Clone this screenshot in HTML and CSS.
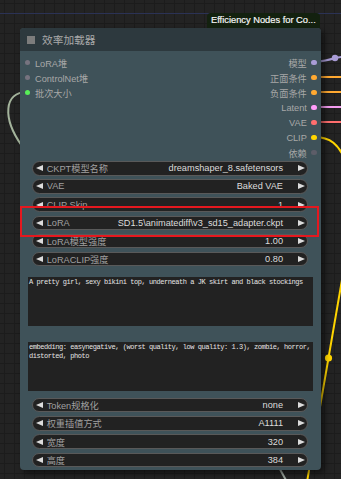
FILE: index.html
```html
<!DOCTYPE html>
<html lang="zh">
<head>
<meta charset="utf-8">
<title>效率加载器</title>
<link rel="stylesheet" href="styles.css">
</head>
<body>
<svg class="wires" width="341" height="479" viewBox="0 0 341 479">
  <line x1="0" y1="13.5" x2="341" y2="13.5" stroke="#2b3255" stroke-width="1"/>
  <path d="M27 92 C 4 92, 2 118, 22 146" fill="none" stroke="#a4b49c" stroke-width="2"/>
  <path d="M276 462 L 287 482" fill="none" stroke="#9aa49c" stroke-width="2"/>
  <path d="M314 62 Q 326 61 335 58 L 345 56.5" fill="none" stroke="#a99cd6" stroke-width="2"/>
  <circle cx="335" cy="58" r="3.2" fill="#a99cd6"/>
  <path d="M314 77 H 345" stroke="#ffa931" stroke-width="2"/>
  <path d="M314 92 H 345" stroke="#ffa931" stroke-width="2"/>
  <path d="M314 107 H 345" stroke="#f39cf0" stroke-width="2"/>
  <path d="M314 122 H 345" stroke="#ff6e6e" stroke-width="2"/>
  <path d="M314 137 C 330 137, 339 144, 346 162" fill="none" stroke="#ffd500" stroke-width="2.2"/>
  <path d="M343 274 L 307 482" fill="none" stroke="#ffd500" stroke-width="2"/>
  <circle cx="328.5" cy="358" r="3.6" fill="#ffd500"/>
</svg>

<div class="node">
  <div class="badge">Efficiency Nodes for Co...</div>
  <div class="title"><span class="title-box"></span>效率加载器</div>

  <div class="slots">
    <div class="inputs">
      <div class="in"><span class="dot gray"></span>LoRA堆</div>
      <div class="in"><span class="dot gray"></span>ControlNet堆</div>
      <div class="in"><span class="dot green"></span>批次大小</div>
    </div>
    <div class="outputs">
      <div class="out">模型<span class="dot c-model"></span></div>
      <div class="out">正面条件<span class="dot c-cond"></span></div>
      <div class="out">负面条件<span class="dot c-cond"></span></div>
      <div class="out">Latent<span class="dot c-latent"></span></div>
      <div class="out">VAE<span class="dot c-vae"></span></div>
      <div class="out">CLIP<span class="dot c-clip"></span></div>
      <div class="out">依赖<span class="dot c-dep"></span></div>
    </div>
  </div>

  <div class="widgets first">
    <div class="w"><span class="al"></span><span class="lbl">CKPT模型名称</span><span class="val">dreamshaper_8.safetensors</span><span class="ar"></span></div>
    <div class="w"><span class="al"></span><span class="lbl">VAE</span><span class="val">Baked VAE</span><span class="ar"></span></div>
    <div class="w"><span class="al"></span><span class="lbl">CLIP Skip</span><span class="val">1</span><span class="ar"></span></div>
    <div class="w"><span class="al"></span><span class="lbl">LoRA</span><span class="val">SD1.5\animatediff\v3_sd15_adapter.ckpt</span><span class="ar"></span></div>
    <div class="w"><span class="al"></span><span class="lbl">LoRA模型强度</span><span class="val">1.00</span><span class="ar"></span></div>
    <div class="w"><span class="al"></span><span class="lbl">LoRACLIP强度</span><span class="val">0.80</span><span class="ar"></span></div>
  </div>

  <div class="ta ta1">A pretty girl, sexy bikini top, underneath a JK skirt and black stockings</div>
  <div class="ta ta2">embedding: easynegative, (worst quality, low quality: 1.3), zombie, horror, distorted, photo</div>

  <div class="widgets second">
    <div class="w"><span class="al"></span><span class="lbl">Token规格化</span><span class="val">none</span><span class="ar"></span></div>
    <div class="w"><span class="al"></span><span class="lbl">权重插值方式</span><span class="val">A1111</span><span class="ar"></span></div>
    <div class="w"><span class="al"></span><span class="lbl">宽度</span><span class="val">320</span><span class="ar"></span></div>
    <div class="w"><span class="al"></span><span class="lbl">高度</span><span class="val">384</span><span class="ar"></span></div>
  </div>
</div>

<div class="highlight"></div>
</body>
</html>
```

FILE: styles.css
```css
html, body {
  margin: 0;
  padding: 0;
}

body {
  position: relative;
  width: 341px;
  height: 479px;
  overflow: hidden;
  box-sizing: border-box;
  padding: 28px 0 0 20px;
  background-color: #232323;
  background-image:
    linear-gradient(to right, #1c1c1c 1px, transparent 1px),
    linear-gradient(to bottom, #1c1c1c 1px, transparent 1px);
  background-size: 10px 10px;
  background-position: 4px 3px;
  font-family: "Liberation Sans", "Noto Sans CJK SC", sans-serif;
}

.wires {
  position: absolute;
  left: 0;
  top: 0;
  z-index: 0;
}

.node {
  position: relative;
  z-index: 1;
  width: 301px;
  box-sizing: border-box;
  background: #3f5259;
  border-radius: 4px;
  padding-bottom: 2.9px;
  box-shadow: 3px 3px 6px rgba(0, 0, 0, 0.55);
}

.badge {
  position: absolute;
  left: 187px;
  top: -15px;
  width: 113px;
  height: 15px;
  box-sizing: border-box;
  background: #13210f;
  border-radius: 4px 4px 0 0;
  color: #f5f5f5;
  font-family: "Liberation Sans", sans-serif;
  font-size: 9.3px;
  line-height: 15px;
  padding-left: 4px;
  white-space: nowrap;
  overflow: hidden;
  -webkit-text-stroke: 0.2px #f5f5f5;
}

.title {
  height: 23px;
  background: #2d393e;
  border-radius: 4px 4px 0 0;
  display: flex;
  align-items: center;
  padding-left: 7px;
  gap: 7px;
  color: #a9a9a9;
  font-size: 10.7px;
}

.title-box {
  width: 8px;
  height: 8px;
  background: #7c7c7c;
}

.slots {
  display: flex;
  justify-content: space-between;
  padding-top: 4px;
}

.in, .out {
  height: 15px;
  display: flex;
  align-items: center;
  font-size: 9.2px;
  color: #a8a8a8;
  white-space: nowrap;
}

.in {
  padding-left: 4.75px;
  gap: 4.75px;
}

.outputs {
  display: flex;
  flex-direction: column;
  align-items: flex-end;
}

.out {
  padding-right: 4.5px;
  gap: 4.2px;
}

.dot {
  width: 5.5px;
  height: 5.5px;
  border-radius: 50%;
  flex: none;
}

.gray { background: #77737f; }
.green { background: #58ee58; }
.c-model { background: #a99cd6; }
.c-cond { background: #ffa931; }
.c-latent { background: #ff9cf9; }
.c-vae { background: #ff6e6e; }
.c-clip { background: #ffd500; }
.c-dep { background: #5d5d68; }

.widgets {
  display: flex;
  flex-direction: column;
  gap: 3.7px;
  margin: 0 13px 0 12px;
}

.widgets.first { margin-top: 1px; }
.widgets.second { margin-top: 7px; }

.w {
  height: 14.5px;
  box-sizing: border-box;
  border: 1px solid #595959;
  border-radius: 8px;
  background: #222;
  display: flex;
  align-items: center;
  padding: 0 2px 0 3px;
  font-size: 9.2px;
  white-space: nowrap;
  overflow: hidden;
}

.al, .ar {
  width: 0;
  height: 0;
  flex: none;
  border-top: 3.5px solid transparent;
  border-bottom: 3.5px solid transparent;
}

.al { border-right: 7px solid #dcdcdc; }
.ar { border-left: 7px solid #dcdcdc; margin-left: 15px; }

.lbl {
  margin-left: 3.7px;
  color: #a0a0a0;
}

.val {
  margin-left: auto;
  color: #dcdcdc;
}

.ta {
  margin: 0 8px;
  height: 49px;
  box-sizing: border-box;
  background: #222;
  color: #e4e4e4;
  font-family: "Liberation Mono", monospace;
  font-size: 7px;
  letter-spacing: -0.45px;
  line-height: 8.6px;
  padding: 1.5px 1px;
  overflow: hidden;
  word-wrap: break-word;
}

.ta1 { margin-top: 10.5px; }
.ta2 { margin-top: 16px; }

.highlight {
  position: absolute;
  left: 20px;
  top: 205.7px;
  width: 298.7px;
  height: 31.3px;
  box-sizing: border-box;
  border: 2px solid #e5181f;
  z-index: 2;
}
```
